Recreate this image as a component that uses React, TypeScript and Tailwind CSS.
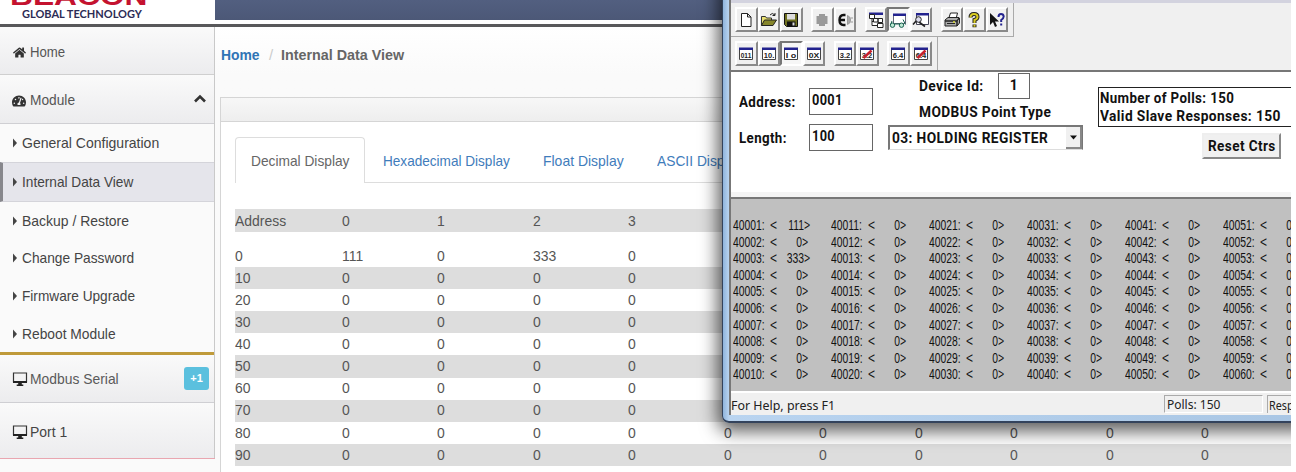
import React from "react";
import { FaHome, FaTachometerAlt } from "react-icons/fa";

type TextProps = { className?: string; children: React.ReactNode };

const Label = ({ className = "", children }: TextProps) => (
  <span className={`inline-block origin-left whitespace-nowrap ${className}`}>{children}</span>
);

const Monitor = () => (
  <svg width="16" height="15" viewBox="0 0 16 15" className="shrink-0">
    <path d="M1.500 1h13v8.600h-13z" fill="none" stroke="#333" strokeWidth="1.200" />
    <path d="M1 9h14v2H1zM6.200 11h3.600v1.600h1.500V14H4.700v-1.400h1.500z" fill="#222" />
  </svg>
);

const subItems = [
  { name: "General Configuration", box: "h-[38px] bg-[#fafafa]", text: "scale-x-[0.935]" },
  {
    name: "Internal Data View",
    box: "h-[40px] bg-[#e5e5eb] border-y border-y-[#d4d4da] border-l-[3px] border-l-[#87878c]",
    text: "scale-x-[0.91]",
    active: true,
  },
  { name: "Backup / Restore", box: "h-[37px] bg-[#fafafa]", text: "scale-x-[0.93]" },
  { name: "Change Password", box: "h-[38px] bg-[#fafafa]", text: "scale-x-[0.915]" },
  { name: "Firmware Upgrade", box: "h-[38px] bg-[#fafafa]", text: "scale-x-[0.91]" },
  { name: "Reboot Module", box: "h-[37px] bg-[#fafafa]", text: "scale-x-[0.92]" },
];

const Sidebar = () => (
  <aside className="flex h-[445px] w-[215px] shrink-0 flex-col text-[15px] text-[#444]">
    <div className="flex flex-col border-r border-[#c9c9c9]">
      <div className="flex h-[48px] items-center border-b border-[#cfcfcf] bg-linear-to-b from-[#fafafa] to-[#ececee] pt-[3px] pl-[13px] text-[#555]">
        <FaHome className="mr-[4px] h-[13px] w-[13px] text-[#333]" />
        <Label className="scale-x-[0.88]">Home</Label>
      </div>
      <div className="flex h-[49px] items-center border-b border-[#cfcfd3] bg-linear-to-b from-[#fafafa] to-[#ececee] pt-[3px] pl-[12px] text-[#555]">
        <FaTachometerAlt className="mr-[4px] h-[14px] w-[14px] text-[#333]" />
        <Label className="grow scale-x-[0.915]">Module</Label>
        <svg width="14" height="12" viewBox="0 0 14 12" className="mr-[7px] mb-[3px]">
          <path d="M2 8.500 7 3.500l5 5" fill="none" stroke="#333" strokeWidth="2.600" />
        </svg>
      </div>
      {subItems.map((s) => (
        <div key={s.name} className={`flex items-center pt-px ${s.active ? "pl-[9px]" : "pl-[12px]"} ${s.box}`}>
          <svg width="10" height="10" viewBox="0 0 10 10" className="mb-px shrink-0">
            <path d="M1 0.500 5 5 1 9.500z" fill="#444" />
          </svg>
          <Label className={s.text}>{s.name}</Label>
        </div>
      ))}
      <div className="flex h-[51px] items-center border-t-[3px] border-b border-t-[#bf9a3a] border-b-[#cfcfd3] bg-linear-to-b from-[#fafafa] to-[#ececee] pt-[2px] pl-[12px] text-[#5a5a5a]">
        <Monitor />
        <Label className="ml-[2px] grow scale-x-[0.925]">Modbus Serial</Label>
        <span className="mr-[5px] mb-[3px] flex h-[23px] w-[25px] items-center justify-center rounded-[3px] bg-[#5bc0de] text-[11px] font-bold text-white">
          +1
        </span>
      </div>
      <div className="flex h-[55px] items-center bg-linear-to-b from-[#fafafa] to-[#ececee] pt-[4px] pl-[12px]">
        <Monitor />
        <Label className="ml-[2px] scale-x-[0.93]">Port 1</Label>
      </div>
    </div>
    <div className="grow border-t border-[#e9a6b0] bg-[#fafafa]" />
  </aside>
);

const rowNames = ["0", "10", "20", "30", "40", "50", "60", "70", "80", "90"];
const digits = ["0", "1", "2", "3", "4", "5", "6", "7", "8", "9"];

const TableRow = ({ cells, className }: { cells: string[]; className: string }) => (
  <div className={`flex items-center ${className}`}>
    {cells.map((c, i) => (
      <div key={i} className={i === 0 ? "w-[106.500px] shrink-0" : "w-[95.500px] shrink-0"}>
        <Label className="scale-x-[0.93]">{c}</Label>
      </div>
    ))}
  </div>
);

const MainPage = () => (
  <main className="flex h-[445px] grow flex-col bg-linear-to-b from-white to-[#fafafa] to-[48px] pl-[5px] text-[15px]">
    <div className="flex h-[70px] items-center pb-[13px] pl-[1px] font-bold text-[#666]">
      <Label className="w-[38px] scale-x-[0.925] text-[#2f74b5]">Home</Label>
      <Label className="w-[22px] pl-[10px] font-normal text-[#ccc]">/</Label>
      <Label className="scale-x-[0.955]">Internal Data View</Label>
    </div>
    <section className="flex grow flex-col border-t border-l border-[#d5d5d5] bg-white">
      <div className="h-[24px] shrink-0 border-b border-[#d5d5d5] bg-linear-to-b from-[#f7f7f7] to-[#eee]" />
      <div className="ml-[14px] mt-[15px] flex h-[46px] shrink-0 text-[#3f7cbb]">
        <div className="flex w-[130px] items-center rounded-t-[4px] border border-b-0 border-[#ddd] pt-[2px] pl-[15px] text-[#666]">
          <Label className="scale-x-[0.916]">Decimal Display</Label>
        </div>
        <div className="flex grow items-center border-b border-[#ddd] pt-[4px] pl-[17.500px]">
          <Label className="w-[160.500px] scale-x-[0.905]">Hexadecimal Display</Label>
          <Label className="w-[113.500px] scale-x-[0.93]">Float Display</Label>
          <Label className="scale-x-[0.92]">ASCII Display</Label>
        </div>
      </div>
      <div className="ml-[14px] mt-[26px] text-[#555]">
        <TableRow cells={["Address", ...digits]} className="mb-[13px] h-[23px] bg-[#ddd] pt-px" />
        {rowNames.map((r, i) => (
          <TableRow
            key={r}
            cells={[r, ...digits.map((_, c) => (i === 0 && c === 0 ? "111" : i === 0 && c === 2 ? "333" : "0"))]}
            className={i % 2 ? "h-[22.100px] bg-[#ddd]" : "h-[22.100px]"}
          />
        ))}
      </div>
    </section>
  </main>
);

const ToolButton = ({ pressed, children }: { pressed?: boolean; children: React.ReactNode }) => (
  <div
    className={`flex h-[25px] w-[22.500px] items-center justify-center border-2 ${
      pressed
        ? "border-t-[#777] border-l-[#777] border-r-white border-b-white bg-[#f6f6f6]"
        : "border-t-white border-l-white border-r-[#8a8a8a] border-b-[#8a8a8a] bg-[#f0f0f0]"
    }`}
  >
    <svg width="18" height="18" viewBox="0 0 18 18" className="shrink-0">
      {children}
    </svg>
  </div>
);

const MiniWindow = ({ text, struck }: { text: string; struck?: boolean }) => (
  <>
    <path d="M2.500 3.500h13v11h-13z" fill="#fff" stroke="#444" />
    <path d="M2 2.500h14v2.500H2z" fill="#22228e" />
    <text x="9" y="12.500" textAnchor="middle" fontSize="7" fontWeight="bold" fontFamily="Liberation Sans, sans-serif" textLength="10.500" lengthAdjust="spacingAndGlyphs" fill="#222">
      {text}
    </text>
    {struck && <path d="m5.500 13 8-7.500" stroke="#c8202c" strokeWidth="2.400" />}
  </>
);

const Toolbars = () => (
  <div className="h-[67px] bg-[#f0f0f0]">
    <div className="flex h-[34px] w-[283px] items-center gap-[8.500px] border-r border-b border-[#aaa] pl-[4px]">
      <div className="flex">
        <ToolButton>
          <path d="M4.500 2.500h6l3.500 3.500v9.500H4.500zM10.500 2.500V6H14" fill="#fff" stroke="#222" />
        </ToolButton>
        <ToolButton>
          <path d="M1.500 14.500v-9h4l1 1.500h5v2.500" fill="#e8e070" stroke="#333" />
          <path d="m1.500 14.500 3-5.500h12l-3.500 5.500z" fill="#85852a" stroke="#222" />
          <path d="M10 4q2-3 5 0m0-2v2.500h-2.500" fill="none" stroke="#222" />
        </ToolButton>
        <ToolButton>
          <path d="M2.500 2.500h13v13h-11l-2-2z" fill="#6f7020" stroke="#111" />
          <path d="M5 3h8v5.500H5z" fill="#ddd" />
          <path d="M5 10.500h8.500V15H5z" fill="#111" />
          <path d="M10.500 11.500h2v3h-2z" fill="#ddd" />
        </ToolButton>
      </div>
      <div className="flex">
        <ToolButton>
          <path d="M6 3h6v2h2.500v8H12v2H6v-2H3.500V5H6z" fill="#999" />
        </ToolButton>
        <ToolButton>
          <path d="M9.500 4H7.500Q3.500 4 3.500 9t4 5h2M4 9h5" fill="none" stroke="#111" strokeWidth="2.400" />
          <path d="M11.500 4.500q3 1 3 4.500t-3 4.500zM14.500 7h2.500M14.500 11h2.500" fill="#aaa" stroke="#999" />
        </ToolButton>
      </div>
      <div className="flex">
        <ToolButton>
          <path d="M2 1.500h14v2.500H2z" fill="#22228e" />
          <path d="M2.500 3.500v4h5v-4zM5 7.500v7h5.500M5 10.500h5.500" fill="#fff" stroke="#222" />
          <path d="M6.500 7.500h4.500v3.500H6.500zM11 7.500h4.500v4H11zM10.500 12.500H16v4h-5.500z" fill="#fff" stroke="#222" />
        </ToolButton>
        <ToolButton pressed>
          <path d="M4.500 3.500h12v9h-12z" fill="#fff" stroke="#667" />
          <path d="M4 2.500h13V5H4z" fill="#22228e" />
          <path d="M3 10 1.500 14M14 8.500l2.500 5M6 13h5" fill="none" stroke="#176050" />
          <circle cx="3.500" cy="14.200" r="2.200" fill="#bde8d3" stroke="#176050" />
          <circle cx="12.500" cy="14.200" r="2.200" fill="#bde8d3" stroke="#176050" />
        </ToolButton>
        <ToolButton>
          <path d="M4.500 3.500h12v10h-12z" fill="#fff" stroke="#445" />
          <path d="M4 2h13v2.500H4z" fill="#22228e" />
          <path d="m5 9-4 4.500M7 11l6 4.500" stroke="#222" strokeWidth="1.600" />
          <circle cx="6.500" cy="8.500" r="2.800" fill="#dde" stroke="#222" />
        </ToolButton>
      </div>
      <div className="flex">
        <ToolButton>
          <path d="m5.500 8 2-6h7l-1.500 6" fill="#fff" stroke="#222" />
          <path d="m2 9 3-2.500h11L14 10H2zM2 10h12v5H2zM14 10l2.500-3v5L14 15z" fill="#aaa" stroke="#222" />
          <path d="M4 12.500h8" stroke="#222" />
          <path d="M10 11h2" stroke="#dd3" strokeWidth="1.400" />
        </ToolButton>
        <ToolButton>
          <path d="M5.500 6.500Q5.500 3 9 3t3.500 3Q12.500 8 9.500 9v3M9.500 13.500v2.800" fill="none" stroke="#222" strokeWidth="4" />
          <path d="M5.500 6.500Q5.500 3 9 3t3.500 3Q12.500 8 9.500 9v3M9.500 13.800v2" fill="none" stroke="#d9cc22" strokeWidth="2" />
        </ToolButton>
        <ToolButton>
          <path d="M2 2v12l3-3 2 5 2-1-2-4.500h4z" fill="#111" />
          <path d="M10.500 6Q10.500 3 13 3t2.700 2.500Q15.500 7.500 13.200 9v2M13.200 12.500v2" fill="none" stroke="#22228e" strokeWidth="2" />
        </ToolButton>
      </div>
    </div>
    <div className="flex h-[33px] w-[207px] items-center gap-[8.500px] border-r border-[#aaa] pl-[4px]">
      <div className="flex">
        <ToolButton><MiniWindow text="011" /></ToolButton>
        <ToolButton><MiniWindow text="10." /></ToolButton>
        <ToolButton pressed><MiniWindow text="I o" /></ToolButton>
        <ToolButton><MiniWindow text="0X" /></ToolButton>
      </div>
      <div className="flex">
        <ToolButton><MiniWindow text="3.2" /></ToolButton>
        <ToolButton><MiniWindow text="3.2" struck /></ToolButton>
      </div>
      <div className="flex">
        <ToolButton><MiniWindow text="6.4" /></ToolButton>
        <ToolButton><MiniWindow text="6.4" struck /></ToolButton>
      </div>
    </div>
  </div>
);

const Form = () => (
  <div className="flex h-[122px] border-t-2 border-[#777] bg-white font-['Roboto',sans-serif] text-[14px] leading-none font-bold tracking-[0.4px] text-[#111]">
    <div className="ml-[8px] flex w-[149px] flex-col gap-[9px] pt-[16px]">
      <div className="flex h-[27px] items-center">
        <Label className="w-[70px] scale-x-[0.955]">Address:</Label>
        <div className="h-[27px] w-[64px] border border-[#666] pt-[4px] pl-[2px]">
          <Label className="scale-x-[0.91]">0001</Label>
        </div>
      </div>
      <div className="flex h-[27px] items-center">
        <Label className="w-[70px] scale-x-[0.95]">Length:</Label>
        <div className="h-[27px] w-[64px] border border-[#666] pt-[4px] pl-[2px]">
          <Label className="scale-x-[0.91]">100</Label>
        </div>
      </div>
    </div>
    <div className="flex w-[210px] flex-col pt-px">
      <div className="ml-[31px] flex h-[26px] items-center">
        <Label className="w-[79px] scale-x-[0.985]">Device Id:</Label>
        <div className="flex h-[26px] w-[32px] items-center justify-center border border-[#666] pb-[3px]">1</div>
      </div>
      <Label className="mt-[6px] ml-[31px] scale-x-[0.98]">MODBUS Point Type</Label>
      <div className="mt-[6px] flex h-[25px] w-[195px] items-center border border-t-2 border-l-2 border-[#777] border-b-[#ddd] pl-[2px]">
        <Label className="w-[174px] shrink-0 scale-x-[0.98]">03: HOLDING REGISTER</Label>
        <div className="flex h-[22px] w-[16px] shrink-0 items-center justify-center border-r-2 border-b-2 border-[#888] bg-[#f0f0f0]">
          <svg width="7" height="5" viewBox="0 0 7 5"><path d="M0 0.500h7L3.500 4.500z" fill="#111" /></svg>
        </div>
      </div>
    </div>
    <div className="flex grow flex-col pt-[15px]">
      <div className="flex h-[40px] flex-col gap-[4px] border border-r-0 border-[#222] pt-[3px] pl-px">
        <Label className="scale-x-[0.95]">Number of Polls: 150</Label>
        <Label className="scale-x-[0.982]">Valid Slave Responses: 150</Label>
      </div>
      <div className="mt-[6px] ml-[104px] flex h-[26px] w-[79px] items-center border-2 border-t-[#eee] border-l-[#eee] border-r-[#888] border-b-[#888] bg-[#f0f0f0] pl-[4px]">
        <Label className="scale-x-[0.97]">Reset Ctrs</Label>
      </div>
    </div>
  </div>
);

const Registers = () => (
  <div className="flex h-[194px] overflow-hidden border-t-2 border-[#777] bg-[#c0c0c0] pt-[18px] pl-[2px] text-[15px] leading-[16.600px] text-[#111]">
    {[0, 1, 2, 3, 4, 5].map((col) => (
      <div key={col} className="w-[98.100px] shrink-0">
        {digits.map((_, row) => {
          const n = col * 10 + row + 1;
          const value = n === 1 ? "111" : n === 3 ? "333" : "0";
          return (
            <div key={row} className="flex h-[16.600px]">
              <Label className="w-[37px] scale-x-[0.69]">{40000 + n}:</Label>
              <Label className="w-[8px] scale-x-[0.8]">&lt;</Label>
              <span className={`inline-block origin-right scale-x-[0.69] text-right ${n === 1 || n === 3 ? "w-[26px]" : "w-[24px]"}`}>
                {value}
              </span>
              <Label className="scale-x-[0.7]">&gt;</Label>
            </div>
          );
        })}
      </div>
    ))}
  </div>
);

const PollWindow = () => (
  <div className="absolute top-[-20px] left-[722px] flex h-[443px] w-[600px] rounded-bl-[7px] border border-b-2 border-[#33435c] bg-linear-to-r from-[#8fb4dc] via-[#b9d4f0] via-[1%] to-[#a9c6e4] pt-[19px] pb-[6px] pl-[6px] shadow-[0_4px_18px_4px_rgba(0,0,0,0.65)]">
    <div className="flex w-[563px] shrink-0 flex-col border-l-2 border-[#777] bg-[#f0f0f0]">
      <div className="h-[3px] bg-[#d3d3df]" />
      <Toolbars />
      <Form />
      <div className="h-[5px] bg-[#f4f4f4]" />
      <Registers />
      <div className="flex h-[24px] items-center border-t-2 border-white font-['Noto_Sans',sans-serif] text-[12px] text-[#222]">
        <Label className="w-[433px] shrink-0 scale-x-[1.035] pt-[3px]">For Help, press F1</Label>
        <div className="mr-[4px] flex h-[18px] w-[99px] shrink-0 items-center border border-[#aaa] border-r-white border-b-white pt-[2px] pl-[2px]">
          <Label>Polls: 150</Label>
        </div>
        <div className="flex h-[18px] grow items-center overflow-hidden border-t border-l border-[#aaa] pt-[2px] pl-px">
          <Label className="scale-x-[0.9]">Resp</Label>
        </div>
      </div>
    </div>
  </div>
);

export default function App() {
  return (
    <div className="h-[472px] w-[1296px] overflow-hidden bg-white font-['Liberation_Sans',Arial,sans-serif]">
      <div className="relative flex h-[472px] w-[1291px] flex-col overflow-hidden">
        <header className="flex h-[27px] shrink-0 border-b-[3px] border-[#58585a]">
          <div className="flex h-[24px] w-[215px] flex-col overflow-hidden bg-white">
            <div className="flex h-[5px] shrink-0 items-start">
              <Label className="mt-[-18px] ml-[10px] scale-x-[1.220] text-[26px] leading-[28px] font-black text-[#c4122f]">BEACON</Label>
            </div>
            <Label className="mt-[2px] ml-[22px] font-['Lato',sans-serif] text-[11px] leading-[13px] font-bold text-[#2c2c55]">
              GLOBAL TECHNOLOGY
            </Label>
          </div>
          <div className="h-[20px] grow bg-linear-to-b from-[#525f80] to-[#4c5877]" />
        </header>
        <div className="flex">
          <Sidebar />
          <MainPage />
        </div>
        <PollWindow />
      </div>
    </div>
  );
}
